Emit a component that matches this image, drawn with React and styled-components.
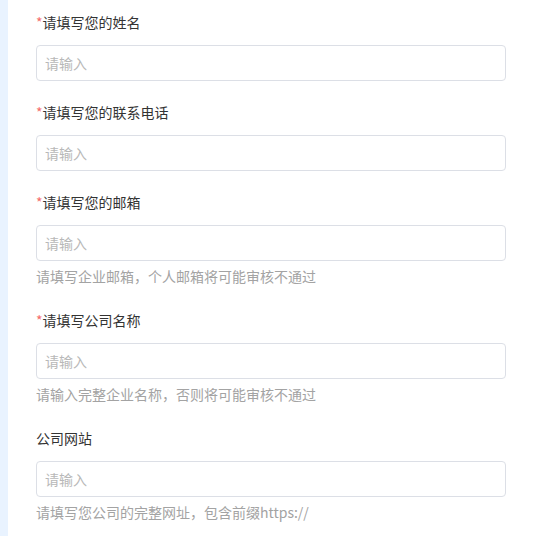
import React from "react";
import styled, { createGlobalStyle } from "styled-components";

const GlobalStyle = createGlobalStyle`
  html, body {
    margin: 0;
    padding: 0;
    background: #ffffff;
  }
  body {
    font-family: "Noto Sans CJK SC", "Noto Sans", sans-serif;
  }
`;

const Page = styled.div`
  display: flex;
  min-height: 100vh;
`;

const SideStrip = styled.div`
  width: 8px;
  flex-shrink: 0;
  background: #e9f3ff;
`;

const FormBody = styled.div`
  width: 470px;
  padding: 11px 0 0 28px;
`;

const Field = styled.div`
  display: flex;
  flex-direction: column;
  margin-bottom: ${(p) => (p.$hasHint ? "23px" : "20px")};
`;

const Label = styled.label`
  display: block;
  height: 22px;
  font-size: 14px;
  line-height: 22px;
  color: #333333;
  margin-bottom: 12px;
  overflow: hidden;
`;

const Star = styled.span`
  color: #f56c6c;
`;

const Input = styled.input`
  box-sizing: border-box;
  display: block;
  width: 100%;
  height: 36px;
  margin: 0;
  padding: 0 8px;
  border: 1px solid #dcdfe6;
  border-radius: 4px;
  font-family: inherit;
  font-size: 14px;
  color: #606266;
  outline: none;

  &::placeholder {
    color: #b8b8b8;
  }
`;

const Hint = styled.div`
  height: 20px;
  margin-top: 5px;
  font-size: 14px;
  line-height: 20px;
  color: #a3a3a3;
  overflow: hidden;
`;

const fields = [
  { label: "请填写您的姓名", required: true },
  { label: "请填写您的联系电话", required: true },
  { label: "请填写您的邮箱", required: true, hint: "请填写企业邮箱，个人邮箱将可能审核不通过" },
  { label: "请填写公司名称", required: true, hint: "请输入完整企业名称，否则将可能审核不通过" },
  { label: "公司网站", required: false, hint: "请填写您公司的完整网址，包含前缀https://" },
];

const App = () => {
  return (
    <>
      <GlobalStyle />
      <Page>
        <SideStrip />
        <FormBody>
          {fields.map((f) => (
            <Field key={f.label} $hasHint={!!f.hint}>
              <Label>
                {f.required && <Star>*</Star>}
                {f.label}
              </Label>
              <Input placeholder="请输入" />
              {f.hint && <Hint>{f.hint}</Hint>}
            </Field>
          ))}
        </FormBody>
      </Page>
    </>
  );
};

export default App;
